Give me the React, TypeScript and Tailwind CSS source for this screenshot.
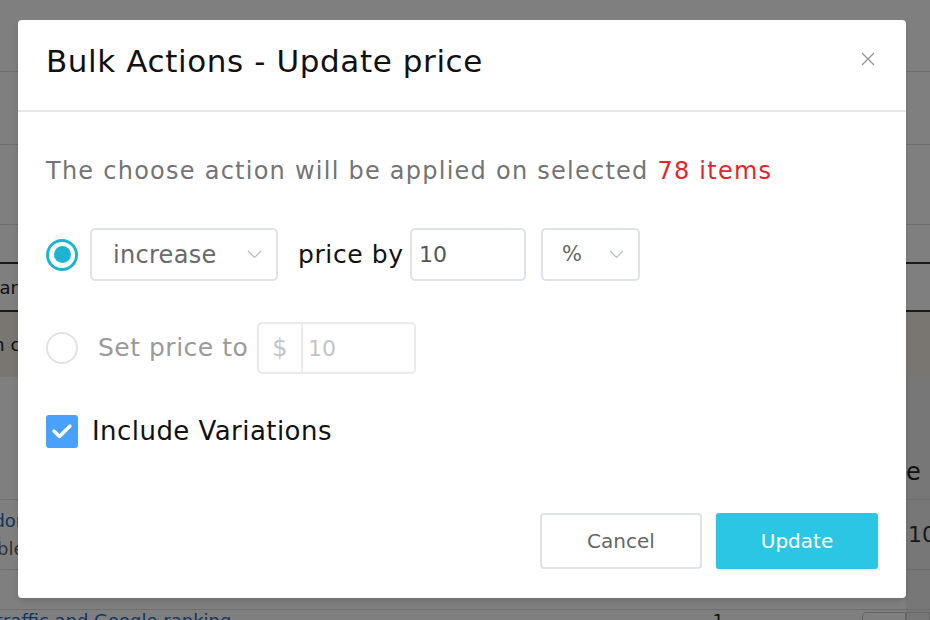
import React from "react";

const FONT = "'DejaVu Sans', 'Liberation Sans', sans-serif";

function Chevron() {
  return (
    <svg width="15" height="9" viewBox="0 0 15 9" fill="none">
      <path d="M1 1 L7.5 7.5 L14 1" stroke="#b5b9c0" strokeWidth="1.2" />
    </svg>
  );
}

function Background() {
  return (
    <div className="flex flex-col w-[930px] h-[620px] bg-white text-[18px] text-[#222]">
      <div className="h-[72px] shrink-0 border-b border-[#dddddd]" />
      <div className="h-[73px] shrink-0 border-b border-[#dddddd]" />
      <div className="h-[80px] shrink-0 border-b border-[#dddddd]" />
      <div className="h-[37px] shrink-0" />
      <div className="h-[50px] shrink-0 border-y-2 border-[#333] flex items-center">
        <span className="ml-[-23px]">Search</span>
      </div>
      <div className="h-[65px] shrink-0 bg-[#f3ece2] flex items-center">
        <span className="ml-[-12px]">In case</span>
      </div>
      <div className="h-[245px] shrink-0 flex">
        <div className="flex-1 flex flex-col">
          <div className="h-[123px] shrink-0 border-b border-[#dddddd]" />
          <div className="h-[70px] shrink-0 border-b border-[#dddddd] flex flex-col justify-center leading-[28px]">
            <span className="ml-[-40px] text-[#2a6ebb]">Vendor</span>
            <span className="ml-[-22px] text-[#666]">Table</span>
          </div>
          <div className="h-[40px] shrink-0 border-b border-[#dddddd]" />
          <div className="flex items-start h-[12px] shrink-0 overflow-visible">
            <span className="ml-[-4px] text-[#2a6ebb] leading-[22px]">traffic and Google ranking</span>
            <span className="ml-[481px] leading-[22px]">1</span>
            <div className="ml-[138px] mt-[2px] w-[44px] h-[20px] border border-[#ccc] rounded-tl-[4px]" />
          </div>
        </div>
        <div className="w-[24px] shrink-0 bg-[#eeeeee] flex flex-col">
          <div className="h-[123px] shrink-0 border-b border-[#dddddd] flex items-end pb-[12px] text-[24px] leading-[30px]">
            e
          </div>
          <div className="h-[70px] shrink-0 border-b border-[#dddddd] flex items-center pl-[2px] text-[22px] text-[#333]">
            10
          </div>
          <div className="h-[40px] shrink-0 border-b border-[#dddddd]" />
          <div className="mt-[2px] w-[24px] h-[20px] border border-[#ccc]" />
        </div>
      </div>
    </div>
  );
}

export default function App() {
  return (
    <div
      className="relative w-[930px] h-[620px] overflow-hidden bg-white"
      style={{ fontFamily: FONT }}
    >
      <Background />
      <div className="absolute inset-0 bg-black/50" />
      <div className="absolute left-[18px] top-[20px] w-[888px] h-[578px] bg-white rounded-[4px] shadow-md flex flex-col">
        <div className="h-[92px] shrink-0 flex items-center justify-between pl-[28px] pr-[31px] pb-[8px] border-b-2 border-[#e6e6e6]">
          <div className="text-[31px] leading-[40px] text-[#111] tracking-[0.6px]">
            Bulk Actions - Update price
          </div>
          <svg width="14" height="14" viewBox="0 0 14 14" fill="none" className="mb-[4px]">
            <path d="M1 1 L13 13 M13 1 L1 13" stroke="#8d929b" strokeWidth="1.2" />
          </svg>
        </div>

        <div className="flex flex-col px-[28px] pt-[43px]">
          <div className="text-[24px] leading-[32px] text-[#747474] tracking-[1.25px] whitespace-nowrap">
            The choose action will be applied on selected{" "}
            <span className="text-[#e3242f]">78 items</span>
          </div>

          <div className="mt-[41px] h-[53px] flex items-center">
            <div className="w-[32px] h-[32px] shrink-0 rounded-full border-[3px] border-[#1fb3d3] flex items-center justify-center">
              <div className="w-[17px] h-[17px] rounded-full bg-[#1fb3d3]" />
            </div>
            <div className="ml-[12px] w-[188px] h-[53px] shrink-0 border-2 border-[#dfe2e7] rounded-[5px] flex items-center justify-between pl-[21px] pr-[14px]">
              <span className="text-[24px] text-[#6a6a6a] tracking-[0.3px]">increase</span>
              <Chevron />
            </div>
            <span className="ml-[20px] w-[105px] shrink-0 whitespace-nowrap text-[25px] text-[#111] tracking-[0.6px]">
              price by
            </span>
            <div className="ml-[7px] w-[116px] h-[53px] shrink-0 border-2 border-[#dfe2e7] rounded-[5px] flex items-center pl-[7px]">
              <span className="text-[22px] text-[#555]">10</span>
            </div>
            <div className="ml-[15px] w-[99px] h-[53px] shrink-0 border-2 border-[#dfe2e7] rounded-[5px] flex items-center justify-between pl-[19px] pr-[14px]">
              <span className="text-[21px] text-[#666]">%</span>
              <Chevron />
            </div>
          </div>

          <div className="mt-[41px] h-[52px] flex items-center">
            <div className="w-[32px] h-[32px] shrink-0 rounded-full border-2 border-[#dfe2e7]" />
            <span className="ml-[20px] w-[150px] shrink-0 whitespace-nowrap text-[25px] text-[#9a9a9a] tracking-[0.5px]">
              Set price to
            </span>
            <div className="ml-[9px] flex h-[52px]">
              <div className="w-[44px] h-full border-2 border-r-0 border-[#e8eaee] rounded-l-[5px] flex items-center justify-center text-[24px] text-[#c4c4c4]">
                $
              </div>
              <div className="w-[115px] h-full border-2 border-[#e8eaee] rounded-r-[5px] flex items-center pl-[5px] text-[22px] text-[#c4c4c4]">
                10
              </div>
            </div>
          </div>

          <div className="mt-[40px] h-[34px] flex items-center">
            <div className="w-[32px] h-[33px] shrink-0 rounded-[3px] bg-[#4aa1fb] flex items-center justify-center">
              <svg width="22" height="18" viewBox="0 0 22 18" fill="none">
                <path d="M3 9 L8.5 14.5 L19 4" stroke="white" strokeWidth="3.4" strokeLinecap="round" strokeLinejoin="round" />
              </svg>
            </div>
            <span className="ml-[14px] whitespace-nowrap text-[26px] text-[#111] tracking-[0.45px]">Include Variations</span>
          </div>

          <div className="mt-[65px] flex justify-end gap-[14px]">
            <div className="w-[162px] h-[56px] border-2 border-[#dfe2e7] rounded-[4px] flex items-center justify-center text-[20px] text-[#666]">
              Cancel
            </div>
            <div className="w-[162px] h-[56px] bg-[#2bc6e4] rounded-[3px] shadow-sm flex items-center justify-center text-[20px] text-white">
              Update
            </div>
          </div>
        </div>
      </div>
    </div>
  );
}
